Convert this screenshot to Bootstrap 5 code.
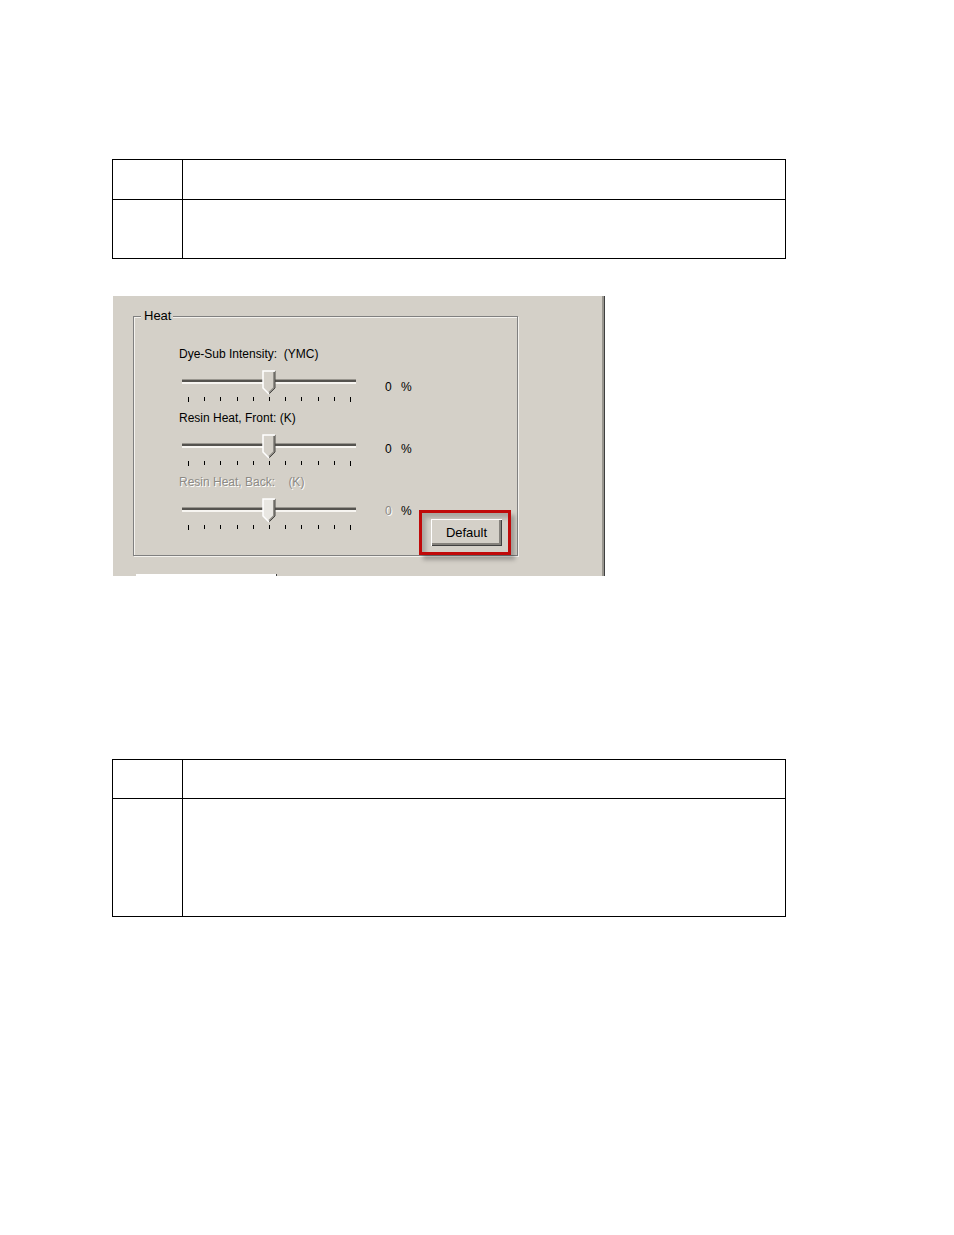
<!DOCTYPE html>
<html lang="en">

<head>
    <meta charset="UTF-8">
    <meta name="viewport" content="width=device-width, initial-scale=1.0">
    <title>Heat Settings</title>
    <link href="https://cdn.jsdelivr.net/npm/bootstrap@5.3.3/dist/css/bootstrap.min.css" rel="stylesheet">
    <style>
        body {
            background: #fff;
            color: #000;
            font-family: "Liberation Sans", Arial, sans-serif;
            font-size: 12px;
            line-height: 16px;
        }

        .manual-page {
            padding: 159px 168px 80px 112px;
        }

        /* Ruled step tables */
        .step-table {
            table-layout: fixed;
            border-collapse: collapse;
        }

        .step-table th,
        .step-table td {
            border: 1px solid #000;
            padding: 0;
        }

        .step-no {
            width: 70px;
        }

        .step-head {
            height: 40px;
        }

        .step-short {
            height: 59px;
        }

        .step-tall {
            height: 118px;
        }

        .lower-table {
            margin-top: 183px;
        }

        .lower-table .step-head {
            height: 39px;
        }

        /* Dialog */
        .dialog-panel {
            max-width: 492px;
            margin: 37px 0 0 1px;
            padding: 13px 86px 0 20px;
            background: #d4d0c8;
            border-right: 1px solid #404040;
            box-shadow: inset -2px 0 0 #99968f;
        }

        .group-box {
            min-width: 0;
            border: 1px solid #808080;
            box-shadow: 1px 1px 0 #f4f2ee, inset 1px 1px 0 #f4f2ee;
            padding: 0 6px 0 45px;
        }

        .group-box legend {
            float: none;
            width: auto;
            margin: 0 0 0 -38px;
            padding: 0 2px 0 3px;
            background: #d4d0c8;
            font-size: 13px;
            line-height: 14px;
        }

        .slider-list {
            width: 206px;
            padding: 23px 0 17px;
        }

        .slider-item {
            height: 64px;
        }

        .slider-item label {
            white-space: pre;
        }

        .value-list {
            padding-top: 56px;
            gap: 46px;
        }

        .value-list output {
            width: 16px;
        }

        .dimmed {
            color: #8c8a85;
            text-shadow: 1px 1px 0 #fff;
        }

        .heat-range {
            -webkit-appearance: none;
            appearance: none;
            width: 174px;
            height: 25px;
            margin: 8px 0 2px 3px;
            background: transparent;
        }

        .heat-range::-webkit-slider-runnable-track {
            height: 25px;
            background: linear-gradient(#99968f 0 1px, #55534f 1px 3px, #f7f5f1 3px 5px) 0 9px / 100% 5px no-repeat;
        }

        .heat-range::-webkit-slider-thumb {
            -webkit-appearance: none;
            width: 14px;
            height: 25px;
            border: 0;
            background: url("data:image/svg+xml,%3Csvg xmlns='http://www.w3.org/2000/svg' width='14' height='25'%3E%3Cpath d='M1 1H13V18L7 24L1 18Z' fill='%23d4d0c8'/%3E%3Cpath d='M12 2V18L7 23' fill='none' stroke='%23928f89' stroke-width='2'/%3E%3Cpath d='M13 1V18L7 24' fill='none' stroke='%23484643'/%3E%3Cpath d='M13 1H1V18L7 24' fill='none' stroke='%23fff' stroke-width='1.5'/%3E%3C/svg%3E") no-repeat;
        }

        .heat-range:disabled::-webkit-slider-thumb {
            background-image: url("data:image/svg+xml,%3Csvg xmlns='http://www.w3.org/2000/svg' width='14' height='25'%3E%3Cpath d='M1 1H13V18L7 24L1 18Z' fill='%23e9e7e2'/%3E%3Cpath d='M12 2V18L7 23' fill='none' stroke='%23928f89' stroke-width='2'/%3E%3Cpath d='M13 1V18L7 24' fill='none' stroke='%23484643'/%3E%3Cpath d='M13 1H1V18L7 24' fill='none' stroke='%23fff' stroke-width='1.5'/%3E%3C/svg%3E");
        }

        /* Red callout round the button */
        .callout-frame {
            border: 3px solid #c00a0a;
            padding: 6px 6px 6px 9px;
            box-shadow: 4px 5px 4px rgba(0, 0, 0, .25), inset 4px 5px 4px rgba(0, 0, 0, .2);
        }

        .btn-default {
            width: 71px;
            height: 27px;
            padding: 0;
            border: 0;
            border-radius: 0;
            background: #d4d0c8;
            color: #000;
            font-size: 13px;
            line-height: 16px;
            box-shadow: inset 1px 1px 0 #fff, inset -1px -1px 0 #404040, inset -3px -3px 0 #85827c;
        }

        .panel-foot {
            width: 141px;
            height: 2px;
            margin: 18px 0 0 3px;
            background: #fff;
            border-right: 1px solid #404040;
        }
    </style>
</head>

<body>
    <main class="manual-page">
        <table class="step-table w-100">
            <thead>
                <tr class="step-head">
                    <th class="step-no"></th>
                    <th></th>
                </tr>
            </thead>
            <tbody>
                <tr class="step-short">
                    <td></td>
                    <td></td>
                </tr>
            </tbody>
        </table>

        <form class="dialog-panel">
            <fieldset class="group-box">
                <legend>Heat</legend>
                <div class="d-flex">
                    <div class="slider-list flex-shrink-0">
                        <div class="slider-item d-flex flex-column align-items-start">
                            <label for="dyeSub">Dye-Sub Intensity:  (YMC)</label>
                            <input type="range" class="heat-range" id="dyeSub" min="-100" max="100" value="0">
                            <svg class="tick-marks" width="176" height="5" aria-hidden="true"></svg>
                        </div>
                        <div class="slider-item d-flex flex-column align-items-start">
                            <label for="resinFront">Resin Heat, Front: (K)</label>
                            <input type="range" class="heat-range" id="resinFront" min="-100" max="100" value="0">
                            <svg class="tick-marks" width="176" height="5" aria-hidden="true"></svg>
                        </div>
                        <div class="slider-item d-flex flex-column align-items-start">
                            <label for="resinBack" class="dimmed">Resin Heat, Back:    (K)</label>
                            <input type="range" class="heat-range" id="resinBack" min="-100" max="100" value="0" disabled>
                            <svg class="tick-marks" width="176" height="5" aria-hidden="true"></svg>
                        </div>
                    </div>
                    <div class="value-list d-flex flex-column">
                        <div class="d-flex"><output for="dyeSub">0</output><span>%</span></div>
                        <div class="d-flex"><output for="resinFront">0</output><span>%</span></div>
                        <div class="d-flex"><output for="resinBack" class="dimmed">0</output><span>%</span></div>
                    </div>
                    <div class="callout-frame ms-auto align-self-end">
                        <button type="reset" class="btn btn-default d-block">Default</button>
                    </div>
                </div>
            </fieldset>
            <div class="panel-foot"></div>
        </form>

        <table class="step-table lower-table w-100">
            <thead>
                <tr class="step-head">
                    <th class="step-no"></th>
                    <th></th>
                </tr>
            </thead>
            <tbody>
                <tr class="step-tall">
                    <td></td>
                    <td></td>
                </tr>
            </tbody>
        </table>
    </main>

    <script src="https://cdn.jsdelivr.net/npm/bootstrap@5.3.3/dist/js/bootstrap.bundle.min.js"></script>
    <script>
        // Eleven ticks under each slider, the two end ones a little longer
        document.querySelectorAll('.tick-marks').forEach(svg => {
            let ticks = '';
            for (let i = 0; i <= 10; i++) {
                const x = 9 + Math.round(i * 16.2);
                const height = i === 0 || i === 10 ? 5 : 4;
                ticks += `<rect x="${x}" y="0" width="1" height="${height}" fill="#000"/>`;
            }
            svg.innerHTML = ticks;
        });

        // Show each slider's value beside it
        document.querySelectorAll('.heat-range').forEach(range => {
            range.addEventListener('input', () => {
                document.querySelector(`output[for="${range.id}"]`).textContent = range.value;
            });
        });
    </script>
</body>

</html>
